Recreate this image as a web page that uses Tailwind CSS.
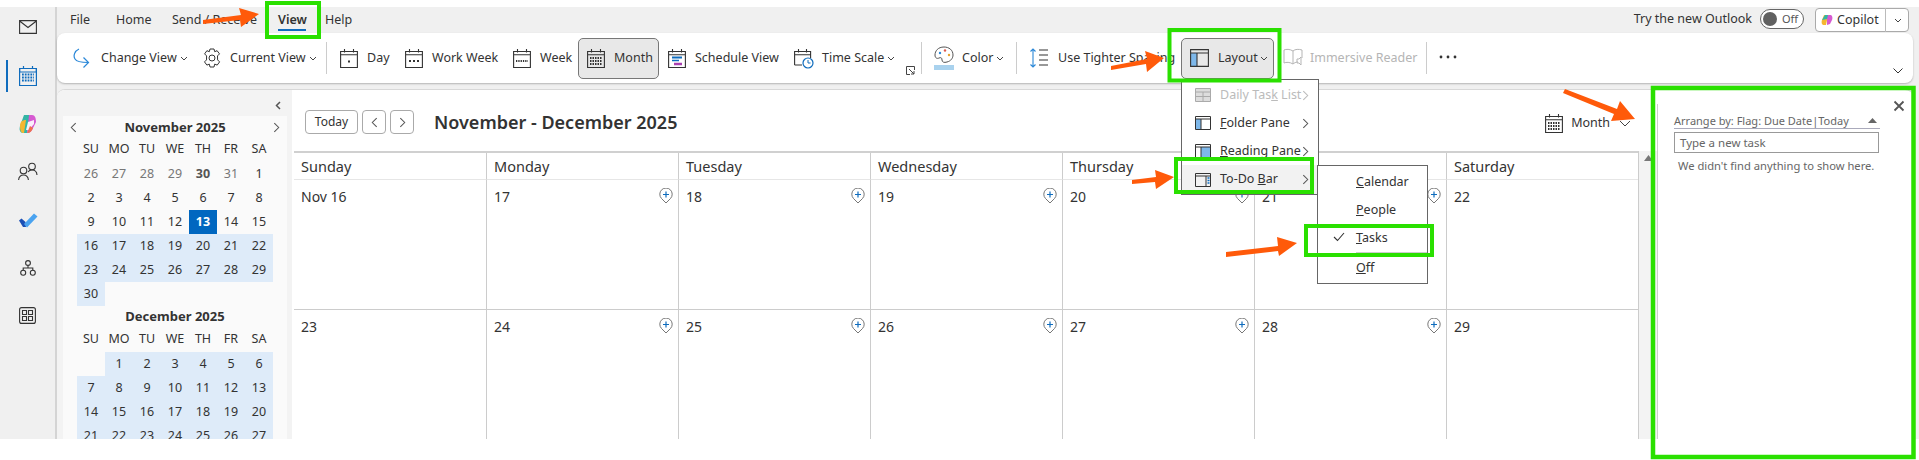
<!DOCTYPE html>
<html lang="en">
<head>
    <meta charset="UTF-8">
    <meta name="viewport" content="width=device-width, initial-scale=1.0">
    <title>Outlook - Calendar</title>
    <script src="https://cdn.jsdelivr.net/npm/@tailwindcss/browser@4"></script>
</head>
<body class="bg-white overflow-hidden">
<svg class="hidden">
    <symbol id="cal" viewBox="0 0 18 20" fill="none" stroke="#333" stroke-width="1.1"><path d="M.6 3.5h16.8v16H.6zM.6 6.8h16.8M4.5 1v3.5M13.5 1v3.5"/></symbol>
    <symbol id="caret" viewBox="0 0 8 5" fill="none" stroke="#444" stroke-width="1"><path d="M1 1l3 3 3-3"/></symbol>
    <symbol id="more" viewBox="0 0 8 12" fill="none" stroke="#555" stroke-width="1.2"><path d="M1.5 1l5 5-5 5"/></symbol>
    <symbol id="add" viewBox="0 0 14 16" fill="none"><path d="M7 15L2.5 10.5A6.2 6.2 0 1 1 11.500 10.500z" stroke="#777" stroke-width="1" fill="#fff"/><path d="M7 3.500v6M4 6.500h6" stroke="#0f6cbd" stroke-width="1.200"/></symbol>
</svg>
<div class="relative w-[1919px] h-[460px] overflow-hidden font-['Noto_Sans','Liberation_Sans',sans-serif] text-[#333]">
    <div class="mt-[7px] h-[432px] bg-[#f0f0f0] flex">
        <!-- app rail -->
        <nav class="w-[57px] shrink-0 border-r-2 border-[#d4d4d4] flex flex-col items-center relative">
            <svg class="mt-[13px]" width="18" height="14" viewBox="0 0 18 14" fill="none" stroke="#333" stroke-width="1.100"><path d="M.6.600h16.800v12.800H.6zM.6 1l8.400 6.500L17.400 1"/></svg>
            <div class="absolute left-[6px] top-[53px] w-[2px] h-[32px] bg-[#0f6cbd]"></div>
            <svg class="mt-[31px]" width="18" height="21" viewBox="0 0 18 21" fill="none"><path d="M.6 3.500h16.800v17H.6z" stroke="#0f6cbd" stroke-width="1.200"/><path d="M.6 3.500h16.800v3.500H.6zM4.500 1v3M13.500 1v3" stroke="#0f6cbd" stroke-width="1.200"/><path d="M3 9.500h12M3 12.500h12M3 15.500h12" stroke="#0f6cbd" stroke-width="1.800" stroke-dasharray="1.800 1"/></svg>
            <svg class="mt-[28px]" width="18" height="20" viewBox="0 0 18 20"><path d="M5 1h6L8 19H4C1 19 0 16 1 12z" fill="#33b5a5"/><path d="M1 12c0-4 2-6 6-6l-2 13H4C2 19 1 16 1 12z" fill="#f5b731"/><path d="M10 1h3c3 0 4 3 4 7l-3 6c-1 3-3 5-6 5z" fill="#d65ad1"/><path d="M9 8l-2 8h3l5-6V6z" fill="#fff" opacity=".9"/><path d="M8 19c3 0 5-2 6-5l-3-2z" fill="#f0704f"/></svg>
            <svg class="mt-[28px]" width="20" height="19" viewBox="0 0 20 19" fill="none" stroke="#333" stroke-width="1.100"><circle cx="5.500" cy="8.500" r="3.300"/><path d="M.6 18c.3-3.500 2.300-5 4.900-5s4.600 1.500 4.900 5"/><circle cx="14" cy="4.500" r="3.300"/><path d="M10 10c1-1.500 2.300-2 4-2 3 0 4.800 2 5 5"/></svg>
            <svg class="mt-[31px]" width="20" height="16" viewBox="0 0 20 16"><path d="M1 8.500l2.500-2 4 3.500L8 15 5 15z" fill="#1b4fb5"/><path d="M6 12L16 1.500 19.500 4.500 9 15.500z" fill="#4aa3f0"/></svg>
            <svg class="mt-[32px]" width="16" height="16" viewBox="0 0 16 16" fill="none" stroke="#333" stroke-width="1.100"><circle cx="8" cy="3" r="2.400"/><circle cx="3.200" cy="12.800" r="2.500"/><circle cx="12.800" cy="12.800" r="2.500"/><path d="M8 5.500v2.500M3.200 10.300V8h9.600v2.300"/></svg>
            <svg class="mt-[31px]" width="17" height="17" viewBox="0 0 17 17" fill="none" stroke="#333" stroke-width="1.100"><rect x=".6" y=".6" width="15.800" height="15.800" rx="2"/><path d="M3.500 3.500h4v4h-4zM9.500 3.500h4v4h-4zM3.500 9.500h4v4h-4zM9.500 9.500h4v4h-4z"/></svg>
        </nav>

        <div class="flex-1 min-w-0 flex flex-col">
            <!-- tabs -->
            <div class="h-[26px] flex items-center text-[12.500px] relative shrink-0">
                <span class="ml-[13px] w-[46px]">File</span>
                <span class="w-[56px]">Home</span>
                <span class="w-[106px]">Send / Receive</span>
                <span class="w-[47px] font-semibold relative">View<span class="absolute left-0 top-[18px] w-[28px] h-[2px] bg-[#0f6cbd]"></span></span>
                <span>Help</span>
                <div class="ml-auto flex items-center mr-[10px]">
                    <span class="text-[12.500px] leading-none mr-[8px] -mt-[2px]">Try the new Outlook</span>
                    <div class="w-[44px] h-[20px] rounded-full border border-[#666] bg-white flex items-center pl-[2px] gap-[5px] mr-[11px] -mt-[2px]">
                        <span class="w-[14px] h-[14px] rounded-full bg-[#616161]"></span>
                        <span class="text-[11px] text-[#555]">Off</span>
                    </div>
                    <div class="w-[94px] h-[24px] rounded-[4px] border border-[#aaa] bg-white flex items-center">
                        <svg class="ml-[5px] mr-[4px]" width="12" height="12" viewBox="0 0 12 12"><path d="M3 1h4L5 11H3C1 11 0 9 1 6z" fill="#f5b731"/><path d="M6 1h3c2 0 3 2 2 5l-2 4-3 1z" fill="#d65ad1"/><path d="M4 1h3L6 5 1 6z" fill="#33b5a5"/></svg>
                        <span class="text-[12.500px] w-[48px]">Copilot</span>
                        <span class="w-px h-[24px] bg-[#bbb]"></span>
                        <svg class="ml-[8px]" width="8" height="5"><use href="#caret"/></svg>
                    </div>
                </div>
            </div>

            <!-- ribbon -->
            <div class="h-[50px] w-[1856px] shrink-0 bg-white rounded-[8px] shadow-[0_1px_2px_rgba(0,0,0,0.25)] flex items-center pl-[16px] text-[12.500px] relative">
                <div class="w-[130px] flex items-center">
                    <svg class="mr-[10px]" width="18" height="20" viewBox="0 0 18 20" fill="none" stroke="#2b88d8" stroke-width="1.200"><path d="M6 1C1.500 3 0 8 2 11c1.500 2.500 5 3.500 13 3.500M10.500 9.500l5 5-5 5"/></svg>
                    <span>Change View</span>
                    <svg class="ml-[3px]" width="8" height="5"><use href="#caret"/></svg>
                </div>
                <div class="w-[123px] flex items-center">
                    <svg class="mr-[9px]" width="18" height="20" viewBox="0 0 18 20" fill="none" stroke="#333" stroke-width="1"><path d="M7 1h4l.7 2.700 2.400-1 2.400 3.200-2 2 .1 4 2 2-2.400 3.200-2.500-1L11 19H7l-.7-2.900-2.400 1L1.500 13.900l2-2 .1-4-2-2L3.900 2.700l2.400 1z"/><circle cx="9" cy="10" r="3"/></svg>
                    <span>Current View</span>
                    <svg class="ml-[3px]" width="8" height="5"><use href="#caret"/></svg>
                </div>
                <span class="w-px h-[32px] bg-[#ccc] mr-[13px]"></span>
                <div class="w-[65px] flex items-center">
                    <svg class="mr-[9px]" width="18" height="20"><use href="#cal"/><path d="M8 12.500h2v2H8z" fill="#333"/></svg>
                    <span>Day</span>
                </div>
                <div class="w-[108px] flex items-center">
                    <svg class="mr-[9px]" width="18" height="20"><use href="#cal"/><path d="M4 13h10" stroke="#333" stroke-width="2" stroke-dasharray="2 2"/></svg>
                    <span>Work Week</span>
                </div>
                <div class="w-[65px] flex items-center">
                    <svg class="mr-[9px]" width="18" height="20"><use href="#cal"/><path d="M3 13h12" stroke="#333" stroke-width="2" stroke-dasharray="1.300 1"/></svg>
                    <span>Week</span>
                </div>
                <div class="w-[81px] h-[41px] rounded-[5px] border border-[#777] bg-[#e8e8e8] flex items-center pl-[8px]">
                    <svg class="mr-[9px]" width="18" height="20"><use href="#cal"/><path d="M3 10h12M3 13h12M3 16h12" stroke="#333" stroke-width="1.800" stroke-dasharray="1.500 1"/></svg>
                    <span>Month</span>
                </div>
                <div class="ml-[9px] w-[126px] flex items-center">
                    <svg class="mr-[9px]" width="18" height="20"><use href="#cal"/><path d="M4 9.500h10" stroke="#0f6cbd" stroke-width="2"/><path d="M4 12.500h7" stroke="#0f6cbd" stroke-width="1.500"/><path d="M6 16h8" stroke="#a83fb0" stroke-width="2.500"/></svg>
                    <span>Schedule View</span>
                </div>
                <div class="w-[127px] flex items-center relative">
                    <svg class="mr-[8px]" width="20" height="21" viewBox="0 0 20 21" fill="none"><path d="M.6 17V3.500h16V10M.6 6.800h16M4.500 1v3.500M12.500 1v3.500M.6 17H8" stroke="#333" stroke-width="1.100"/><circle cx="14" cy="15" r="5" fill="#fff" stroke="#0f6cbd" stroke-width="1.200"/><path d="M14 12v3h2.500" stroke="#0f6cbd"/></svg>
                    <span>Time Scale</span>
                    <svg class="ml-[3px]" width="8" height="5"><use href="#caret"/></svg>
                    <svg class="absolute left-[112px] top-[18px]" width="9" height="9" viewBox="0 0 9 9" fill="none" stroke="#444"><path d="M8.500 4V.5H.5v8H4M3 3l5 5M8 5v3H5"/></svg>
                </div>
                <span class="w-px h-[32px] bg-[#ccc] mr-[12px]"></span>
                <div class="w-[82px] flex items-center">
                    <svg class="mr-[8px]" width="20" height="24" viewBox="0 0 20 24" fill="none"><path d="M10 1C4 1 1 5 1 9c0 3 2 4 4 3s3 0 3 2 2 3 5 2c4-1 6-4 6-7 0-5-4-8-9-8z" stroke="#555"/><circle cx="6" cy="7" r="1.200" fill="#2b88d8"/><circle cx="11" cy="4.500" r="1.200" fill="#e05a4f"/><circle cx="15" cy="9" r="1.200" fill="#e8a530"/><rect y="19" width="20" height="5" fill="#a9d2ee"/></svg>
                    <span>Color</span>
                    <svg class="ml-[3px]" width="8" height="5"><use href="#caret"/></svg>
                </div>
                <span class="w-px h-[32px] bg-[#ccc] mr-[12px]"></span>
                <div class="w-[152px] flex items-center">
                    <svg class="mr-[9px]" width="20" height="20" viewBox="0 0 20 20" fill="none"><path d="M4 1v18M1.500 3.500L4 1l2.500 2.500M1.500 16.500L4 19l2.500-2.500" stroke="#2b88d8" stroke-width="1.100"/><path d="M10 2h9M10 7h9M10 12h9M10 17h9" stroke="#333" stroke-width="1.100"/></svg>
                    <span>Use Tighter Spacing</span>
                </div>
                <div class="w-[93px] h-[41px] rounded-[5px] border border-[#777] bg-[#e8e8e8] flex items-center pl-[8px]">
                    <svg class="mr-[9px]" width="19" height="18" viewBox="0 0 19 18" fill="none"><path d="M1 4h6v13H1z" fill="#7eb8ea"/><path d="M.6.600h17.800v16.800H.6zM.6 4h17.800M7 4v13.400" stroke="#333" stroke-width="1.100"/></svg>
                    <span>Layout</span>
                    <svg class="ml-[2px]" width="8" height="5"><use href="#caret"/></svg>
                </div>
                <div class="ml-[9px] w-[143px] flex items-center text-[#b5b5b5]">
                    <svg class="mr-[6px]" width="21" height="20" viewBox="0 0 21 20" fill="none" stroke="#b5b5b5"><path d="M10 3C7 1 3 1 1 2v13c2-1 6-1 9 1 1-1 3-2 5-2M10 3c2-2 6-2 9-1v8M10 3v13M14 11h2l2-2v8l-2-2h-2z"/></svg>
                    <span>Immersive Reader</span>
                </div>
                <span class="w-px h-[32px] bg-[#ccc]"></span>
                <svg class="ml-[12px] -mt-[2px]" width="18" height="4" viewBox="0 0 18 4" fill="#333"><circle cx="2" cy="2" r="1.400"/><circle cx="9" cy="2" r="1.400"/><circle cx="16" cy="2" r="1.400"/></svg>
                <svg class="absolute left-[1836px] top-[35px]" width="10" height="6" viewBox="0 0 10 6" fill="none" stroke="#333"><path d="M.5.500L5 5l4.500-4.500"/></svg>
            </div>

            <!-- content -->
            <div class="mt-[6px] w-[1856px] flex-1 min-h-0 bg-white rounded-t-[8px] border-t border-[#d8d8d8] flex overflow-hidden">
                <!-- folder pane -->
                <aside class="w-[235px] shrink-0 bg-[#f3f3f3] pl-[6px] relative">
                    <svg class="absolute left-[218px] top-[11px]" width="6" height="9" viewBox="0 0 6 9" fill="none" stroke="#555" stroke-width="1.500"><path d="M5 1L1.500 4.500 5 8"/></svg>
                    <div class="mt-[26px] w-[224px] h-[400px] bg-[#fafafa] pl-[14px] text-[12.500px]">
                        <div class="w-[196px] h-[22px] pt-[1px] flex items-center justify-center font-bold text-[13px] relative">
                            <svg class="absolute -left-[7px] top-[6px]" width="7" height="11"><use href="#more" transform="rotate(180 3.500 5.500)"/></svg>
                            November 2025
                            <svg class="absolute -right-[7px] top-[6px]" width="7" height="11"><use href="#more"/></svg>
                        </div>
                        <div class="grid grid-cols-[repeat(7,28px)] auto-rows-[24px] w-[196px] text-center leading-[24px]">
                            <span class="leading-[22px]">SU</span><span class="leading-[22px]">MO</span><span class="leading-[22px]">TU</span><span class="leading-[22px]">WE</span><span class="leading-[22px]">TH</span><span class="leading-[22px]">FR</span><span class="leading-[22px]">SA</span>
                            <span class="text-[#777]">26</span><span class="text-[#777]">27</span><span class="text-[#777]">28</span><span class="text-[#777]">29</span><span class="text-[#555] font-bold">30</span><span class="text-[#777]">31</span><span>1</span>
                            <span>2</span><span>3</span><span>4</span><span>5</span><span>6</span><span>7</span><span>8</span>
                            <span>9</span><span>10</span><span>11</span><span>12</span><span class="bg-[#0067c0] text-white font-bold">13</span><span>14</span><span>15</span>
                            <span class="bg-[#deebf9]">16</span><span class="bg-[#deebf9]">17</span><span class="bg-[#deebf9]">18</span><span class="bg-[#deebf9]">19</span><span class="bg-[#deebf9]">20</span><span class="bg-[#deebf9]">21</span><span class="bg-[#deebf9]">22</span>
                            <span class="bg-[#deebf9]">23</span><span class="bg-[#deebf9]">24</span><span class="bg-[#deebf9]">25</span><span class="bg-[#deebf9]">26</span><span class="bg-[#deebf9]">27</span><span class="bg-[#deebf9]">28</span><span class="bg-[#deebf9]">29</span>
                            <span class="bg-[#deebf9]">30</span>
                        </div>
                        <div class="w-[196px] h-[22px] flex items-center justify-center font-bold text-[13px]">December 2025</div>
                        <div class="grid grid-cols-[repeat(7,28px)] auto-rows-[24px] w-[196px] text-center leading-[24px]">
                            <span class="leading-[22px]">SU</span><span class="leading-[22px]">MO</span><span class="leading-[22px]">TU</span><span class="leading-[22px]">WE</span><span class="leading-[22px]">TH</span><span class="leading-[22px]">FR</span><span class="leading-[22px]">SA</span>
                            <span></span><span class="bg-[#deebf9]">1</span><span class="bg-[#deebf9]">2</span><span class="bg-[#deebf9]">3</span><span class="bg-[#deebf9]">4</span><span class="bg-[#deebf9]">5</span><span class="bg-[#deebf9]">6</span>
                            <span class="bg-[#deebf9]">7</span><span class="bg-[#deebf9]">8</span><span class="bg-[#deebf9]">9</span><span class="bg-[#deebf9]">10</span><span class="bg-[#deebf9]">11</span><span class="bg-[#deebf9]">12</span><span class="bg-[#deebf9]">13</span>
                            <span class="bg-[#deebf9]">14</span><span class="bg-[#deebf9]">15</span><span class="bg-[#deebf9]">16</span><span class="bg-[#deebf9]">17</span><span class="bg-[#deebf9]">18</span><span class="bg-[#deebf9]">19</span><span class="bg-[#deebf9]">20</span>
                            <span class="bg-[#deebf9]">21</span><span class="bg-[#deebf9]">22</span><span class="bg-[#deebf9]">23</span><span class="bg-[#deebf9]">24</span><span class="bg-[#deebf9]">25</span><span class="bg-[#deebf9]">26</span><span class="bg-[#deebf9]">27</span>
                        </div>
                    </div>
                </aside>

                <!-- calendar -->
                <main class="w-[1365px] shrink-0 flex flex-col">
                    <div class="h-[61px] shrink-0 flex items-start pl-[13px] pr-[26px] pt-[20px]">
                        <button class="w-[53px] h-[24px] rounded-[4px] border border-[#aaa] text-[12px]">Today</button>
                        <button class="ml-[4px] w-[24px] h-[24px] rounded-[4px] border border-[#aaa] flex items-center justify-center"><svg width="7" height="11"><use href="#more" transform="rotate(180 3.500 5.500)"/></svg></button>
                        <button class="ml-[4px] w-[24px] h-[24px] rounded-[4px] border border-[#aaa] flex items-center justify-center"><svg width="7" height="11"><use href="#more"/></svg></button>
                        <h1 class="ml-[20px] text-[18px] font-semibold leading-[24px] whitespace-nowrap">November - December 2025</h1>
                        <div class="ml-auto flex items-center h-[24px] mt-[1px] text-[12.500px]">
                            <svg class="mr-[8px]" width="18" height="20"><use href="#cal"/><path d="M3 10h12M3 13h12M3 16h12" stroke="#333" stroke-width="1.800" stroke-dasharray="1.500 1"/></svg>
                            <span>Month</span>
                            <svg class="ml-[9px]" width="12" height="7" viewBox="0 0 12 7" fill="none" stroke="#444"><path d="M1 1l5 5 5-5"/></svg>
                        </div>
                    </div>
                    <div class="flex-1 min-h-0 flex pl-[2px]">
                        <div class="w-[1344px] shrink-0 border-t-2 border-[#d0d0d0] grid grid-cols-7 grid-rows-[27px_130px_1fr] text-[14px]">
                            <div class="pl-[7px] pt-[3px] text-[14.500px] border-b border-[#e6e6e6]">Sunday</div>
                            <div class="pl-[7px] pt-[3px] text-[14.500px] border-b border-l border-b-[#e6e6e6] border-l-[#ccc]">Monday</div>
                            <div class="pl-[7px] pt-[3px] text-[14.500px] border-b border-l border-b-[#e6e6e6] border-l-[#ccc]">Tuesday</div>
                            <div class="pl-[7px] pt-[3px] text-[14.500px] border-b border-l border-b-[#e6e6e6] border-l-[#ccc]">Wednesday</div>
                            <div class="pl-[7px] pt-[3px] text-[14.500px] border-b border-l border-b-[#e6e6e6] border-l-[#ccc]">Thursday</div>
                            <div class="pl-[7px] pt-[3px] text-[14.500px] border-b border-l border-b-[#e6e6e6] border-l-[#ccc]">Friday</div>
                            <div class="pl-[7px] pt-[3px] text-[14.500px] border-b border-l border-b-[#e6e6e6] border-l-[#ccc]">Saturday</div>

                            <div class="pl-[7px] pt-[6px] border-b border-[#ccc]">Nov 16</div>
                            <div class="pl-[7px] pr-[5px] pt-[6px] border-b border-l border-[#ccc] flex justify-between items-start">17<svg class="mt-[2px]" width="14" height="16"><use href="#add"/></svg></div>
                            <div class="pl-[7px] pr-[5px] pt-[6px] border-b border-l border-[#ccc] flex justify-between items-start">18<svg class="mt-[2px]" width="14" height="16"><use href="#add"/></svg></div>
                            <div class="pl-[7px] pr-[5px] pt-[6px] border-b border-l border-[#ccc] flex justify-between items-start">19<svg class="mt-[2px]" width="14" height="16"><use href="#add"/></svg></div>
                            <div class="pl-[7px] pr-[5px] pt-[6px] border-b border-l border-[#ccc] flex justify-between items-start">20<svg class="mt-[2px]" width="14" height="16"><use href="#add"/></svg></div>
                            <div class="pl-[7px] pr-[5px] pt-[6px] border-b border-l border-[#ccc] flex justify-between items-start">21<svg class="mt-[2px]" width="14" height="16"><use href="#add"/></svg></div>
                            <div class="pl-[7px] pt-[6px] border-b border-l border-[#ccc]">22</div>

                            <div class="pl-[7px] pt-[6px]">23</div>
                            <div class="pl-[7px] pr-[5px] pt-[6px] border-l border-[#ccc] flex justify-between items-start">24<svg class="mt-[2px]" width="14" height="16"><use href="#add"/></svg></div>
                            <div class="pl-[7px] pr-[5px] pt-[6px] border-l border-[#ccc] flex justify-between items-start">25<svg class="mt-[2px]" width="14" height="16"><use href="#add"/></svg></div>
                            <div class="pl-[7px] pr-[5px] pt-[6px] border-l border-[#ccc] flex justify-between items-start">26<svg class="mt-[2px]" width="14" height="16"><use href="#add"/></svg></div>
                            <div class="pl-[7px] pr-[5px] pt-[6px] border-l border-[#ccc] flex justify-between items-start">27<svg class="mt-[2px]" width="14" height="16"><use href="#add"/></svg></div>
                            <div class="pl-[7px] pr-[5px] pt-[6px] border-l border-[#ccc] flex justify-between items-start">28<svg class="mt-[2px]" width="14" height="16"><use href="#add"/></svg></div>
                            <div class="pl-[7px] pt-[6px] border-l border-[#ccc]">29</div>
                        </div>
                        <div class="w-[19px] shrink-0 bg-[#f3f3f3] border-l border-[#ccc] flex justify-center pt-[4px]">
                            <svg width="9" height="6" viewBox="0 0 9 6"><path d="M4.500 0L9 6H0z" fill="#777"/></svg>
                        </div>
                    </div>
                </main>

                <!-- to-do bar -->
                <aside class="flex-1 min-w-0 pt-[14px]">
                    <div class="h-full border-l border-[#ccc] pl-[16px] text-[11px] text-[#666] relative">
                        <svg class="absolute left-[235px] -top-[4px]" width="12" height="12" viewBox="0 0 12 12" stroke="#555" stroke-width="1.800"><path d="M1.500 1.500l9 9M10.500 1.500l-9 9"/></svg>
                        <div class="w-[206px] h-[25px] pt-[9px] border-b border-[#aab] flex items-center justify-between leading-none whitespace-nowrap">
                            <span>Arrange by: Flag: Due Date|Today</span>
                            <svg class="mr-[3px]" width="9" height="5" viewBox="0 0 9 5"><path d="M4.500 0L9 5H0z" fill="#666"/></svg>
                        </div>
                        <div class="mt-[3px] w-[205px] h-[21px] border border-[#999] pl-[5px] flex items-center text-[11.500px]">Type a new task</div>
                        <p class="mt-[5px] pl-[4px] text-[11.200px] whitespace-nowrap">We didn't find anything to show here.</p>
                    </div>
                </aside>
            </div>
        </div>
    </div>

    <!-- layout menu -->
    <div class="absolute left-[1181px] top-[79px] w-[138px] h-[116px] bg-white border border-[#666] z-10 text-[12.500px] py-[1px]">
        <div class="h-[28px] flex items-center pl-[13px] text-[#bbb]">
            <svg class="mr-[9px]" width="16" height="14" viewBox="0 0 16 14" fill="#ddd" stroke="#aaa"><path d="M.5.500h15v13H.5zM.5 4h15M8 4v9.500M.5 8.500h15"/></svg>
            <span class="w-[82px] whitespace-nowrap">Daily Tas<u>k</u> List</span>
            <svg width="7" height="11"><use href="#more" opacity=".4"/></svg>
        </div>
        <div class="h-[28px] flex items-center pl-[13px]">
            <svg class="mr-[9px]" width="16" height="14" viewBox="0 0 16 14" fill="none"><path d="M1 3h5v10H1z" fill="#7eb8ea"/><path d="M.5.500h15v13H.5zM.5 3h15M6 3v10.500" stroke="#333"/></svg>
            <span class="w-[82px] whitespace-nowrap"><u>F</u>older Pane</span>
            <svg width="7" height="11"><use href="#more"/></svg>
        </div>
        <div class="h-[28px] flex items-center pl-[13px]">
            <svg class="mr-[9px]" width="16" height="14" viewBox="0 0 16 14" fill="none"><path d="M6 3h9v10H6z" fill="#7eb8ea"/><path d="M.5.500h15v13H.5zM.5 3h15M6 3v10.500" stroke="#333"/></svg>
            <span class="w-[82px] whitespace-nowrap"><u>R</u>eading Pane</span>
            <svg width="7" height="11"><use href="#more"/></svg>
        </div>
        <div class="h-[29px] flex items-center pl-[13px] bg-[#f2f2f2]">
            <svg class="mr-[9px]" width="16" height="14" viewBox="0 0 16 14" fill="none"><path d="M.5.500h15v13H.5zM.5 3h15M11 3v10.500" stroke="#333"/><path d="M12.500 5h2M12.500 7.500h2M12.500 10h2" stroke="#0f6cbd" stroke-width="1.500"/></svg>
            <span class="w-[82px] whitespace-nowrap">To-Do <u>B</u>ar</span>
            <svg width="7" height="11"><use href="#more"/></svg>
        </div>
    </div>

    <!-- to-do bar submenu -->
    <div class="absolute left-[1317px] top-[165px] w-[111px] h-[119px] bg-white border border-[#666] z-20 text-[12.500px] pl-[38px]">
        <div class="h-[28px] flex items-center mt-[2px]"><span><u>C</u>alendar</span></div>
        <div class="h-[28px] flex items-center"><span><u>P</u>eople</span></div>
        <div class="h-[29px] flex items-center relative border-b border-[#ccc]">
            <svg class="absolute -left-[23px] top-[8px]" width="12" height="10" viewBox="0 0 12 10" fill="none" stroke="#333" stroke-width="1.100"><path d="M1 5l3.500 3.500L11 1"/></svg>
            <span><u>T</u>asks</span>
        </div>
        <div class="h-[30px] flex items-center"><span><u>O</u>ff</span></div>
    </div>

    <!-- annotations -->
    <svg class="absolute left-0 top-0 z-30 pointer-events-none" width="1919" height="460" viewBox="0 0 1919 460" fill="none">
        <g stroke="#2ae000" stroke-width="4">
            <rect x="267" y="3" width="52" height="34"/>
            <rect x="1169.500" y="30" width="110" height="50.500"/>
            <rect x="1176" y="159" width="136" height="33"/>
            <rect x="1306" y="226" width="126" height="29"/>
            <rect x="1653" y="88" width="260.500" height="369" stroke-width="4.500"/>
        </g>
        <g fill="#ff5a0a">
            <path d="M203 20l38-5-2-7 20 6-18 13-1-7-37 4z"/>
            <path d="M1111 66l36-7-2-8 19 7-17 14-1-8-35 6z"/>
            <path d="M1132 180l24-3-1-7 19 7-18 12-1-7-23 2z"/>
            <path d="M1226 252L1278 246 1277 237 1297 243 1279 256 1278 251 1226 257z"/>
            <path d="M1565 89l52 20 3-8 15 18-24 2 3-7-51-21z"/>
        </g>
    </svg>
</div>
</body>
</html>
